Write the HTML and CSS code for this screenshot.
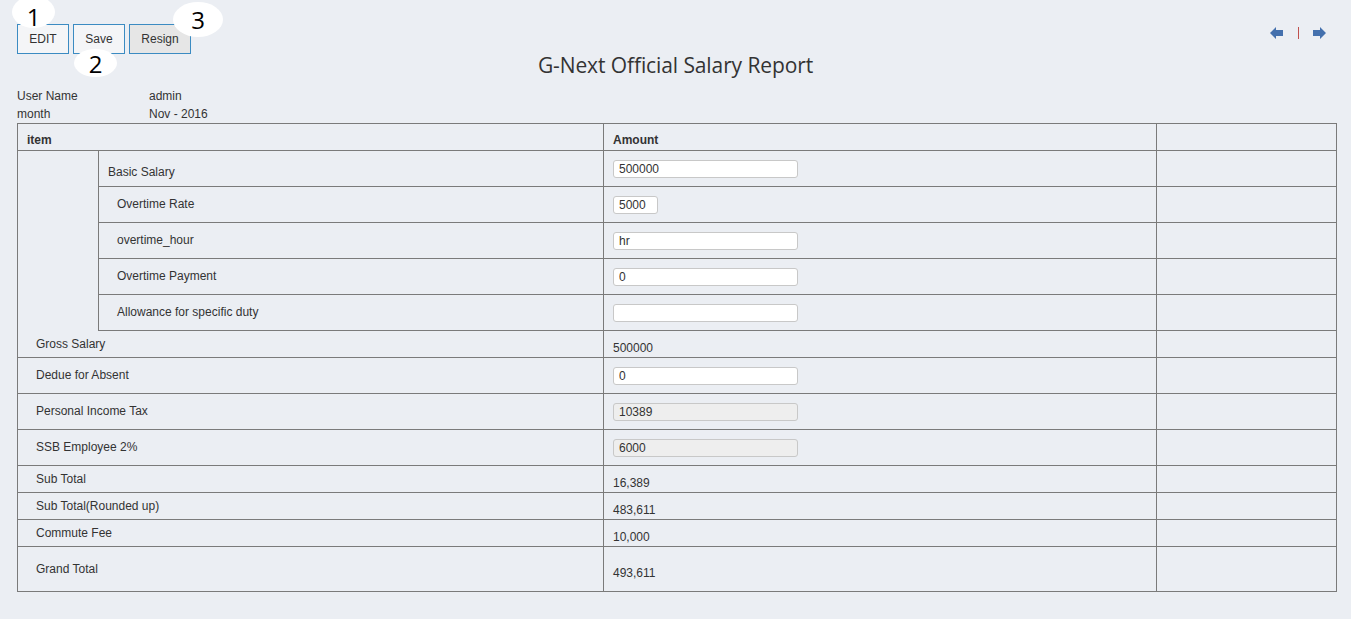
FILE: index.html
```html
<!DOCTYPE html>
<html>
<head>
<meta charset="utf-8">
<link rel="stylesheet" href="styles.css">
</head>
<body>
<div class="page">
  <div class="toolbar">
    <button class="btn btn-sm">EDIT</button>
    <button class="btn btn-sm">Save</button>
    <button class="btn btn-md btn-dark">Resign</button>
    <div class="nav">
      <svg class="arrow" width="13" height="12" viewBox="0 0 13 12"><polygon points="0,6 6,0 6,3 13,3 13,9 6,9 6,12" fill="#4470ad"/></svg>
      <span class="sep"></span>
      <svg class="arrow" width="13" height="12" viewBox="0 0 13 12"><polygon points="13,6 7,0 7,3 0,3 0,9 7,9 7,12" fill="#4470ad"/></svg>
    </div>
  </div>
  <h1 class="title">G-Next Official Salary Report</h1>
  <div class="info">
    <div class="info-row"><span class="info-label">User Name</span><span>admin</span></div>
    <div class="info-row"><span class="info-label">month</span><span>Nov - 2016</span></div>
  </div>
  <table class="report">
    <colgroup><col class="c1"><col class="c2"><col class="c3"><col class="c4"></colgroup>
    <tr class="h27">
      <th colspan="2" class="head">item</th>
      <th class="head">Amount</th>
      <td></td>
    </tr>
    <tr class="h36">
      <td rowspan="5" class="group"></td>
      <td class="sub first">Basic Salary</td>
      <td class="val"><input class="field" type="text" value="500000"></td>
      <td></td>
    </tr>
    <tr class="h36">
      <td class="sub">Overtime Rate</td>
      <td class="val"><input class="field short" type="text" value="5000"></td>
      <td></td>
    </tr>
    <tr class="h36">
      <td class="sub">overtime_hour</td>
      <td class="val"><input class="field" type="text" value="hr"></td>
      <td></td>
    </tr>
    <tr class="h36">
      <td class="sub">Overtime Payment</td>
      <td class="val"><input class="field" type="text" value="0"></td>
      <td></td>
    </tr>
    <tr class="h36">
      <td class="sub">Allowance for specific duty</td>
      <td class="val"><input class="field" type="text" value=""></td>
      <td></td>
    </tr>
    <tr class="h27">
      <td colspan="2" class="label gross">Gross Salary</td>
      <td class="num">500000</td>
      <td></td>
    </tr>
    <tr class="h36">
      <td colspan="2" class="label">Dedue for Absent</td>
      <td class="val"><input class="field" type="text" value="0"></td>
      <td></td>
    </tr>
    <tr class="h36">
      <td colspan="2" class="label">Personal Income Tax</td>
      <td class="val"><input class="field ro" type="text" value="10389" readonly></td>
      <td></td>
    </tr>
    <tr class="h36">
      <td colspan="2" class="label">SSB Employee 2%</td>
      <td class="val"><input class="field ro" type="text" value="6000" readonly></td>
      <td></td>
    </tr>
    <tr class="h27">
      <td colspan="2" class="label">Sub Total</td>
      <td class="num">16,389</td>
      <td></td>
    </tr>
    <tr class="h27">
      <td colspan="2" class="label">Sub Total(Rounded up)</td>
      <td class="num">483,611</td>
      <td></td>
    </tr>
    <tr class="h27">
      <td colspan="2" class="label">Commute Fee</td>
      <td class="num">10,000</td>
      <td></td>
    </tr>
    <tr class="h45">
      <td colspan="2" class="label">Grand Total</td>
      <td class="num">493,611</td>
      <td></td>
    </tr>
  </table>
  <span class="mark m1">1</span>
  <span class="mark m2">2</span>
  <span class="mark m3">3</span>
</div>
</body>
</html>
```
FILE: styles.css
```css
html, body {
  margin: 0;
  padding: 0;
  background: #ebeef3;
}
body {
  font-family: "Liberation Sans", Arial, sans-serif;
  font-size: 12px;
  color: #333;
}
.page {
  position: relative;
  padding: 24px 0 0 17px;
  height: 595px;
  overflow: hidden;
}
.toolbar {
  display: flex;
  align-items: flex-start;
  gap: 4px;
  height: 30px;
}
.btn {
  box-sizing: border-box;
  height: 30px;
  padding: 0;
  border: 1px solid #3b8bc2;
  background: #f4f5f7;
  color: #333;
  font-family: "Liberation Sans", Arial, sans-serif;
  font-size: 12px;
  border-radius: 0;
  text-align: center;
}
.btn-sm {
  width: 52px;
}
.btn-md {
  width: 62px;
}
.btn-dark {
  background: #e6e6e6;
}
.nav {
  margin-left: auto;
  margin-right: 25px;
  margin-top: 3px;
  display: flex;
  align-items: center;
  gap: 15px;
  height: 12px;
}
.arrow {
  display: block;
}
.sep {
  width: 1px;
  height: 12px;
  background: #c0504d;
  margin-right: -1px;
}
.title {
  margin: 0 0 0 -17px;
  height: 24px;
  line-height: 22px;
  text-align: center;
  font-family: "Open Sans", "DejaVu Sans", sans-serif;
  font-weight: normal;
  font-size: 21px;
  color: #333;
  letter-spacing: -0.1px;
}
.info {
  margin-top: 9px;
}
.info-row {
  display: flex;
  height: 18px;
  line-height: 18px;
}
.info-label {
  width: 132px;
}
.report {
  margin-top: 0;
  width: 1319px;
  table-layout: fixed;
  border-collapse: collapse;
  border: 1px solid #333;
}
.c1 { width: 81px; }
.c2 { width: 505px; }
.c3 { width: 553px; }
.c4 { width: 180px; }
.report td, .report th {
  border: 1px solid #7a7a7a;
  padding: 0;
  vertical-align: middle;
  font-size: 12px;
  font-weight: normal;
  text-align: left;
}
.report .head {
  font-weight: bold;
  padding: 0 9px 3px;
  vertical-align: bottom;
  line-height: 14px;
}
.h27 { height: 27px; }
.h36 { height: 36px; }
.h45 { height: 45px; }
.report .group {
  border-bottom: none;
}
.report .gross {
  border-top: none;
}
.report .sub {
  padding-left: 18px;
  padding-bottom: 1px;
}
.report .sub.first {
  padding-left: 9px;
  padding-top: 6px;
  padding-bottom: 0;
}
.report .label {
  padding-left: 18px;
  padding-bottom: 1px;
}
.report .val {
  padding-left: 9px;
}
.report .num {
  padding-left: 9px;
  padding-top: 8px;
}
.field {
  display: block;
  box-sizing: border-box;
  width: 185px;
  height: 18px;
  border: 1px solid #c8c8c8;
  border-radius: 3px;
  background: #fff;
  padding: 0 5px;
  font-family: "Liberation Sans", Arial, sans-serif;
  font-size: 12px;
  color: #333;
}
.field.short {
  width: 45px;
}
.field.ro {
  background: #eeeeee;
}
.mark {
  position: absolute;
  display: flex;
  align-items: center;
  justify-content: center;
  background: #fff;
  border-radius: 50%;
  font-family: "Open Sans", "Liberation Sans", sans-serif;
  font-size: 24px;
  color: #000;
}
.m1 {
  left: 12px;
  top: -4px;
  width: 43px;
  height: 32px;
  line-height: 1;
  padding-top: 10px;
  box-sizing: border-box;
}
.m2 {
  left: 74px;
  top: 49px;
  width: 43px;
  height: 28px;
}
.m3 {
  left: 173px;
  top: 2px;
  width: 50px;
  height: 35px;
}
```
